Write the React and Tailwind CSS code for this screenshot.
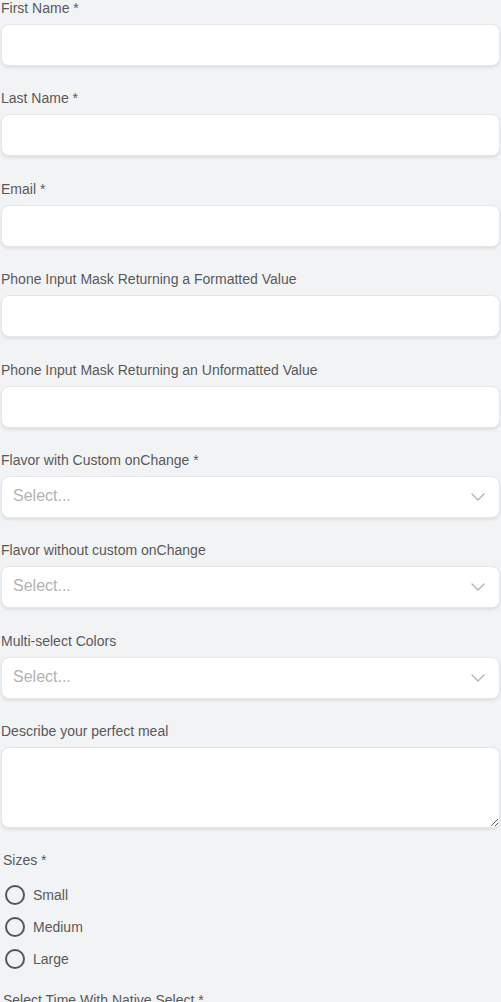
import { ChevronDown } from 'lucide-react';

const font = { fontFamily: '"Liberation Sans", Arial, sans-serif' };

function Label({ children }) {
  return <label className="block h-4 leading-4 text-[14px] text-[#595959] mb-2">{children}</label>;
}

function TextField({ label }) {
  return (
    <div className="mb-[24.4px]">
      <Label>{label}</Label>
      <input className="block w-full h-[42px] bg-white rounded-lg border border-[#e4e6e9] shadow-[0_2px_3px_rgba(0,0,0,0.08)] outline-none px-3" />
    </div>
  );
}

function SelectField({ label }) {
  return (
    <div className="mb-[24.4px]">
      <Label>{label}</Label>
      <div className="flex items-center justify-between h-[42px] bg-white rounded-lg border border-[#e4e6e9] shadow-[0_2px_3px_rgba(0,0,0,0.08)] pl-[11px] pr-[9px]">
        <span className="text-[16px] text-[#b3b3b3] -mt-[2px]">Select...</span>
        <ChevronDown className="w-[24px] h-[24px] text-[#b3b3b3]" strokeWidth={1.4} />
      </div>
    </div>
  );
}

export default function App() {
  const sizes = ['Small', 'Medium', 'Large'];
  return (
    <div className="min-h-screen bg-[#f2f3f5] px-px pt-px" style={font}>
      <div className="-mt-[1px]">
        <TextField label="First Name *" />
        <TextField label="Last Name *" />
        <TextField label="Email *" />
        <TextField label="Phone Input Mask Returning a Formatted Value" />
        <TextField label="Phone Input Mask Returning an Unformatted Value" />
        <SelectField label="Flavor with Custom onChange *" />
        <SelectField label="Flavor without custom onChange" />
        <SelectField label="Multi-select Colors" />
        <div className="mb-[24px]">
          <Label>Describe your perfect meal</Label>
          <textarea className="block w-full h-[81px] bg-white rounded-lg border border-[#e4e6e9] shadow-[0_2px_3px_rgba(0,0,0,0.08)] outline-none px-3 py-2" />
        </div>
        <div className="pl-[2px]">
          <div className="h-4 leading-4 text-[14px] text-[#595959]">Sizes *</div>
          <div className="mt-[17px] flex flex-col gap-[12px]">
            {sizes.map((s) => (
              <div key={s} className="flex items-center h-[20px]">
                <span className="ml-[2px] w-[20px] h-[20px] rounded-full border-2 border-[#555] bg-transparent" />
                <span className="ml-[8px] text-[14px] text-[#595959]">{s}</span>
              </div>
            ))}
          </div>
          <div className="mt-[23px] h-4 leading-4 text-[14px] text-[#595959]">Select Time With Native Select *</div>
        </div>
      </div>
    </div>
  );
}
